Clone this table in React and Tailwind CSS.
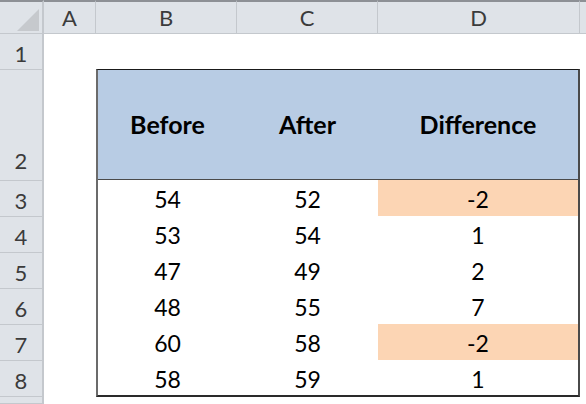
import React from "react";

const rowsData = [
  [54, 52, -2, true],
  [53, 54, 1, false],
  [47, 49, 2, false],
  [48, 55, 7, false],
  [60, 58, -2, true],
  [58, 59, 1, false],
];

export default function App() {
  const hdr = "bg-[#dfe3e8] text-[#3b3b3b] flex justify-center";
  return (
    <div
      className="w-[586px] h-[404px] overflow-hidden bg-white relative"
      style={{ fontFamily: "Lato, 'Open Sans', sans-serif" }}
    >
      <div className="grid grid-cols-[44px_52px_141px_141px_202px_1fr] grid-rows-[34px_36px_111px_36px_36px_36px_36px_36px_36px_1fr] h-full">
        {/* column header row */}
        <div className="bg-[#dfe3e8] border-t-2 border-t-[#8d9095] border-b border-b-[#c4c8cd] border-r-2 border-r-[#c4c8cd] relative">
          <svg className="absolute left-[16px] top-[6px]" width="24" height="24" viewBox="0 0 24 24">
            <polygon points="23,1 23,23 1,23" fill="#c6c9cd" />
          </svg>
        </div>
        {["A", "B", "C", "D"].map((c) => (
          <div
            key={c}
            className={`${hdr} items-center text-[22px] border-t-2 border-t-[#8d9095] border-b border-b-[#c4c8cd] border-r border-r-[#c4c8cd]`}
          >
            {c}
          </div>
        ))}
        <div className="bg-[#dfe3e8] border-t-2 border-t-[#8d9095] border-b border-b-[#c4c8cd]" />

        {/* row headers */}
        {["1", "2", "3", "4", "5", "6", "7", "8", ""].map((r, i) => (
          <div
            key={i}
            className={`${hdr} col-start-1 ${i === 1 ? "items-end pb-[3px]" : "items-center pt-[4px]"} text-[22px] border-b border-b-[#c4c8cd] border-r-2 border-r-[#c4c8cd]`}
            style={{ gridRowStart: i + 2 }}
          >
            {r}
          </div>
        ))}

        {/* table */}
        <div className="col-start-3 col-span-3 row-start-3 row-span-7 grid grid-cols-[139px_141px_1fr] grid-rows-[110px_repeat(6,36px)] border-t border-t-[#1a1a1a] border-l-2 border-l-[#6b6b6b] border-r-2 border-r-[#4a4a4a] border-b-2 border-b-[#2a2a2a] -mt-px text-black">
          {["Before", "After", "Difference"].map((h) => (
            <div
              key={h}
              className="bg-[#b8cce4] flex items-center justify-center font-bold text-[25px] border-b border-b-[#4a4a4a]"
            >
              {h}
            </div>
          ))}
          {rowsData.map(([a, b, d, hi], i) => (
            <React.Fragment key={i}>
              <div className="flex items-center justify-center text-[23px] pt-[3px]">{a}</div>
              <div className="flex items-center justify-center text-[23px] pt-[3px]">{b}</div>
              <div
                className={`flex items-center justify-center text-[23px] pt-[3px] ${hi ? "bg-[#fcd5b4]" : ""}`}
              >
                {d}
              </div>
            </React.Fragment>
          ))}
        </div>
      </div>
    </div>
  );
}
